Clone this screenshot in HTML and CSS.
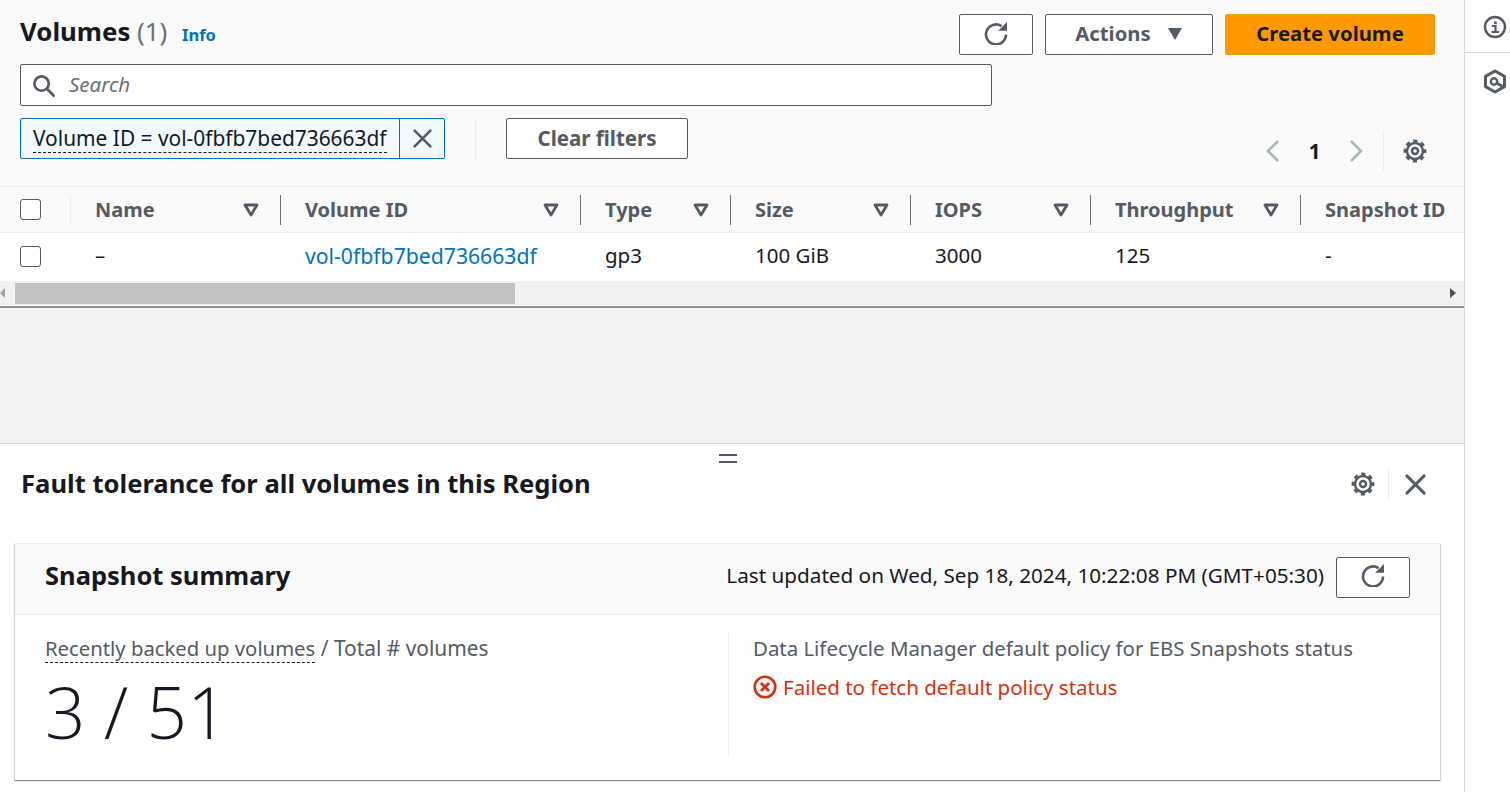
FILE: index.html
```html
<!DOCTYPE html>
<html lang="en">
<head>
  <meta charset="UTF-8" />
  <title>Volumes</title>
  <link rel="stylesheet" href="styles.css">
</head>
<body>
  <svg class="defs" width="0" height="0">
    <symbol id="i-refresh" viewBox="0 0 24 24">
      <path d="M22 13.500a10 10 0 1 1-4.500-8.400" fill="none" stroke="currentColor" stroke-width="2.600"/>
      <path d="M23 1v8.800h-8.800z" fill="currentColor"/>
    </symbol>
    <symbol id="i-gear" viewBox="0 0 24 24">
      <circle cx="12" cy="12" r="8" fill="none" stroke="currentColor" stroke-width="2.4"/>
      <circle cx="12" cy="12" r="10" fill="none" stroke="currentColor" stroke-width="2.8" stroke-dasharray="4.2 3.65" stroke-dashoffset="2.1"/>
      <circle cx="12" cy="12" r="3" fill="none" stroke="currentColor" stroke-width="2.4"/>
    </symbol>
    <symbol id="i-close" viewBox="0 0 24 24">
      <path d="M3 3l18 18M21 3L3 21" fill="none" stroke="currentColor" stroke-width="3" stroke-linecap="round"/>
    </symbol>
    <symbol id="i-sort" viewBox="0 0 16 14">
      <path d="M2 2h12l-6 10z" fill="none" stroke="currentColor" stroke-width="2.8" stroke-linejoin="round"/>
    </symbol>
  </svg>

  <div class="layout">
    <main class="main">
      <section class="top">
        <div class="top-row">
          <h1 class="title">Volumes <span class="count">(1)</span> <a class="info">Info</a></h1>
          <div class="actions">
            <button class="btn btn-refresh"><svg class="ico"><use href="#i-refresh"/></svg></button>
            <button class="btn btn-actions">Actions
              <svg class="caret" viewBox="0 0 16 14"><path d="M1 1h14l-7 12z" fill="currentColor"/></svg>
            </button>
            <button class="btn btn-primary">Create volume</button>
          </div>
        </div>

        <div class="search">
          <svg class="search-ico" viewBox="0 0 24 24"><circle cx="10" cy="10" r="7.5" fill="none" stroke="currentColor" stroke-width="2.8"/><path d="M15.5 15.5l7 7" stroke="currentColor" stroke-width="3" stroke-linecap="round"/></svg>
          <span>Search</span>
        </div>

        <div class="filter-row">
          <div class="chip">
            <span class="chip-text"><span class="dotted">Volume ID = vol-0fbfb7bed736663df</span></span>
            <span class="chip-x"><svg class="ico-x"><use href="#i-close"/></svg></span>
          </div>
          <span class="vline"></span>
          <button class="btn btn-clear">Clear filters</button>
          <div class="pager">
            <svg class="chev" viewBox="0 0 16 24"><path d="M13 2L3 12l10 10" fill="none" stroke="currentColor" stroke-width="2.6"/></svg>
            <span class="page-no">1</span>
            <svg class="chev" viewBox="0 0 16 24"><path d="M3 2l10 10L3 22" fill="none" stroke="currentColor" stroke-width="2.6"/></svg>
            <span class="vline vline-pager"></span>
            <svg class="ico gear"><use href="#i-gear"/></svg>
          </div>
        </div>
      </section>

      <div class="table">
        <div class="thead">
          <div class="cell cell-check"><span class="check"></span></div>
          <div class="cell cell-name th">Name <svg class="sort"><use href="#i-sort"/></svg></div>
          <div class="cell cell-id th">Volume ID <svg class="sort"><use href="#i-sort"/></svg></div>
          <div class="cell cell-type th">Type <svg class="sort"><use href="#i-sort"/></svg></div>
          <div class="cell cell-size th">Size <svg class="sort"><use href="#i-sort"/></svg></div>
          <div class="cell cell-iops th">IOPS <svg class="sort"><use href="#i-sort"/></svg></div>
          <div class="cell cell-thr th">Throughput <svg class="sort"><use href="#i-sort"/></svg></div>
          <div class="cell cell-snap th">Snapshot ID</div>
        </div>
        <div class="trow">
          <div class="cell cell-check"><span class="check"></span></div>
          <div class="cell cell-name">–</div>
          <div class="cell cell-id"><a class="link">vol-0fbfb7bed736663df</a></div>
          <div class="cell cell-type">gp3</div>
          <div class="cell cell-size">100 GiB</div>
          <div class="cell cell-iops">3000</div>
          <div class="cell cell-thr">125</div>
          <div class="cell cell-snap">-</div>
        </div>
        <div class="scrollbar">
          <span class="arrow arrow-left"></span>
          <span class="thumb"></span>
          <span class="arrow arrow-right"></span>
        </div>
      </div>

      <div class="gap"></div>

      <section class="split">
        <span class="handle"></span>
        <div class="split-head">
          <h2 class="split-title">Fault tolerance for all volumes in this Region</h2>
          <div class="split-tools">
            <svg class="ico gear"><use href="#i-gear"/></svg>
            <span class="vline vline-split"></span>
            <svg class="ico-close"><use href="#i-close"/></svg>
          </div>
        </div>

        <div class="card">
          <div class="card-head">
            <h3 class="card-title">Snapshot summary</h3>
            <div class="updated">
              <span class="updated-text">Last updated on Wed, Sep 18, 2024, 10:22:08 PM (GMT+05:30)</span>
              <button class="btn btn-refresh-wide"><svg class="ico"><use href="#i-refresh"/></svg></button>
            </div>
          </div>
          <div class="card-body">
            <div class="col col-left">
              <div class="label label-left"><span class="dotted">Recently backed up volumes</span><span class="label-rest"> / Total # volumes</span></div>
              <div class="big">3 / 51</div>
            </div>
            <div class="col col-right">
              <div class="label label-right">Data Lifecycle Manager default policy for EBS Snapshots status</div>
              <div class="error">
                <svg class="err-ico" viewBox="0 0 24 24"><circle cx="12" cy="12" r="10.3" fill="none" stroke="currentColor" stroke-width="2.6"/><path d="M8 8l8 8M16 8l-8 8" stroke="currentColor" stroke-width="3"/></svg>
                Failed to fetch default policy status
              </div>
            </div>
          </div>
        </div>
      </section>
    </main>

    <aside class="side">
      <div class="side-item side-info">
        <svg class="side-ico" viewBox="0 0 24 24"><circle cx="12" cy="12" r="10" fill="none" stroke="currentColor" stroke-width="2.4"/><path d="M9 11h3.500v5.500M8.500 17h7.500" fill="none" stroke="currentColor" stroke-width="2.200"/><path d="M11 6.500h2.800v2.600H11z" fill="currentColor"/></svg>
      </div>
      <div class="side-item side-hex">
        <svg class="side-ico" viewBox="0 0 24 24"><path d="M12 1.500l9.500 5.400v10.200L12 22.500l-9.500-5.400V6.900z" fill="none" stroke="currentColor" stroke-width="3" stroke-linejoin="round"/><circle cx="11" cy="12" r="3.200" fill="none" stroke="currentColor" stroke-width="2.400"/><path d="M13.500 13.500l7 4" stroke="currentColor" stroke-width="2.800"/></svg>
      </div>
    </aside>
  </div>
</body>
</html>
```

FILE: styles.css
```css
* {
  box-sizing: border-box;
}

html, body {
  height: 100%;
}

body {
  margin: 0;
  font-family: "Noto Sans", "Open Sans", sans-serif;
  font-size: 20.5px;
  color: #16191f;
  background: #fff;
  overflow: hidden;
}

h1, h2, h3 {
  margin: 0;
}

.defs {
  position: absolute;
}

.layout {
  display: flex;
  height: 792px;
}

.main {
  width: 1464px;
  flex: none;
  display: flex;
  flex-direction: column;
  background: #f2f3f3;
}

.side {
  flex: 1;
  background: #fff;
  border-left: 1px solid #d5dbdb;
  color: #545b64;
}

.side-item {
  height: 53px;
  display: flex;
  align-items: flex-start;
  justify-content: center;
  padding-top: 15px;
  padding-left: 14px;
}

.side-info {
  border-bottom: 1px solid #d5dbdb;
}

.side-ico {
  width: 24px;
  height: 24px;
}

.side-hex .side-ico {
  height: 27px;
}

/* Top part */
.top {
  background: #fafafa;
  padding: 13px 29px 0 20px;
  height: 186px;
}

.top-row {
  display: flex;
  justify-content: space-between;
  align-items: flex-start;
  height: 41px;
}

.title {
  font-size: 25.8px;
  font-weight: 700;
  line-height: 36px;
}

.count {
  font-weight: 400;
  color: #687078;
}

.info {
  font-size: 16.5px;
  color: #0073bb;
  margin-left: 8px;
}

.actions {
  display: flex;
  gap: 12px;
  margin-top: 1px;
}

.btn {
  height: 41px;
  padding: 0 0 3px;
  border: 1px solid #545b64;
  border-radius: 2px;
  background: #fff;
  color: #545b64;
  font-family: inherit;
  font-size: 20.3px;
  font-weight: 700;
  display: flex;
  align-items: center;
  justify-content: center;
}

.btn-refresh {
  width: 74px;
}

.btn-actions {
  width: 168px;
  gap: 16px;
}

.btn-primary {
  width: 210px;
  background: #ff9900;
  border-color: #ff9900;
  color: #16191f;
}

.ico {
  width: 24px;
  height: 24px;
}

.btn .ico {
  margin-top: -1px;
}

.caret {
  width: 16px;
  height: 14px;
  margin-top: 2px;
}

.search {
  width: 972px;
  height: 42px;
  margin-top: 10px;
  background: #fff;
  border: 1px solid #545b64;
  border-radius: 2px;
  display: flex;
  align-items: center;
  padding: 0 0 2px 11px;
  gap: 14px;
  color: #687078;
  font-style: italic;
}

.search-ico {
  width: 23px;
  height: 23px;
  margin-top: 2px;
  color: #545b64;
}

.filter-row {
  display: flex;
  align-items: flex-start;
  margin-top: 12px;
}

.chip {
  height: 41px;
  display: flex;
  border: 1px solid #0073bb;
  border-radius: 2px;
  background: #f1faff;
}

.chip-text {
  padding: 0 12px;
  width: 378px;
  line-height: 38px;
  font-size: 20.9px;
  white-space: nowrap;
  overflow: hidden;
}

.dotted {
  border-bottom: 1px dashed #16191f;
  padding-bottom: 0;
}

.chip-x {
  width: 45px;
  border-left: 1px solid #0073bb;
  display: flex;
  align-items: center;
  justify-content: center;
  color: #545b64;
}

.ico-x {
  width: 21px;
  height: 21px;
}

.vline {
  width: 1px;
  height: 41px;
  background: #eaeded;
  margin: 0 30px;
}

.btn-clear {
  width: 182px;
  padding-bottom: 2px;
  font-size: 20.5px;
}

.pager {
  margin-left: auto;
  margin-right: 8px;
  display: flex;
  align-items: center;
  color: #aab7b8;
  margin-top: 12px;
}

.chev {
  width: 16px;
  height: 24px;
}

.page-no {
  color: #16191f;
  font-weight: 700;
  width: 67px;
  text-align: center;
}

.vline-pager {
  margin: 0 19px 0 19px;
}

.gear {
  color: #545b64;
}

/* Table */
.table {
  background: #fff;
  border-top: 1px solid #eaeded;
  border-bottom: 2px solid #879596;
  height: 122px;
}

.thead, .trow {
  display: grid;
  grid-template-columns: 71px 210px 300px 150px 180px 180px 210px 1fr;
  align-items: center;
}

.thead {
  height: 46px;
  background: #fafafa;
  border-bottom: 1px solid #eaeded;
}

.trow {
  height: 48px;
  padding-bottom: 2px;
}

.trow .cell:not(.cell-check) {
  padding-bottom: 2px;
}

.cell {
  padding-left: 24px;
  white-space: nowrap;
}

.cell-check {
  padding-left: 20px;
}

.th {
  position: relative;
  height: 30px;
  line-height: 30px;
  margin-left: -1px;
  font-size: 20px;
  font-weight: 700;
  color: #545b64;
  border-left: 1px solid #687078;
}

.thead .cell-check {
  height: 30px;
  display: flex;
  align-items: center;
  border-right: 1px solid #eaeded;
}

.thead .cell-name {
  border-left: none;
  margin-left: 0;
}

.sort {
  position: absolute;
  right: 22px;
  top: 8px;
  width: 16px;
  height: 14px;
}

.check {
  display: block;
  width: 21px;
  height: 21px;
  background: #fff;
  border: 1px solid #545b64;
  border-radius: 3px;
}

.link {
  color: #0073bb;
  font-size: 21.2px;
}

.scrollbar {
  height: 24px;
  background: #f1f1f1;
  display: flex;
  align-items: center;
}

.thumb {
  width: 500px;
  height: 21px;
  margin-left: 10px;
  background: #c1c1c1;
}

.arrow {
  width: 0;
  height: 0;
  border-top: 5px solid transparent;
  border-bottom: 5px solid transparent;
}

.arrow-left {
  border-right: 5px solid #a3a3a3;
}

.arrow-right {
  margin-left: 935px;
  border-left: 6px solid #505050;
}

.gap {
  height: 135px;
  flex: none;
}

/* Split panel */
.split {
  position: relative;
  flex: 1;
  background: #fff;
  border-top: 1px solid #d5dbdb;
  padding: 0 24px 0 15px;
}

.handle {
  position: absolute;
  left: 719px;
  top: 10px;
  width: 18px;
  height: 9px;
  border-top: 2px solid #545b64;
  border-bottom: 2px solid #545b64;
}

.split-head {
  height: 99px;
  display: flex;
  justify-content: space-between;
  padding: 22px 13px 0 6px;
}

.split-title {
  font-size: 25.6px;
  font-weight: 700;
  line-height: 36px;
}

.split-tools {
  display: flex;
  align-items: center;
  height: 36px;
  color: #545b64;
}

.vline-split {
  height: 34px;
  margin: 0 13px;
}

.ico-close {
  width: 23px;
  height: 23px;
  margin-left: 2px;
}

.card {
  height: 237px;
  background: #fff;
  box-shadow: 0 1px 1px 0 rgba(0, 28, 36, 0.3), 1px 1px 1px 0 rgba(0, 28, 36, 0.15), -1px 1px 1px 0 rgba(0, 28, 36, 0.15);
  border-top: 1px solid #eaeded;
}

.card-head {
  height: 71px;
  background: #fafafa;
  border-bottom: 1px solid #eaeded;
  display: flex;
  justify-content: space-between;
  align-items: center;
  padding: 0 30px 4px 30px;
}

.card-title {
  font-size: 25.5px;
  font-weight: 700;
  margin-top: -4px;
}

.updated {
  display: flex;
  align-items: center;
  gap: 12px;
}

.updated-text {
  font-size: 20.7px;
  padding-bottom: 4px;
}

.btn-refresh-wide {
  width: 74px;
}

.card-body {
  display: flex;
  padding-top: 18px;
}

.col {
  height: 122px;
}

.col-left {
  width: 714px;
  padding-left: 30px;
  border-right: 1px solid #eaeded;
}

.col-right {
  padding-left: 24px;
}

.label {
  color: #545b64;
  line-height: 30px;
}

.label-left {
  font-size: 20.3px;
}

.label-rest {
  font-size: 20.9px;
}

.label-right {
  font-size: 20.4px;
}

.big {
  font-family: "Open Sans", sans-serif;
  font-weight: 300;
  font-size: 71px;
  line-height: 78px;
  margin-top: 10px;
}

.error {
  color: #d13212;
  display: flex;
  align-items: center;
  gap: 6px;
  margin-top: 10px;
}

.err-ico {
  width: 24px;
  height: 24px;
}
```
